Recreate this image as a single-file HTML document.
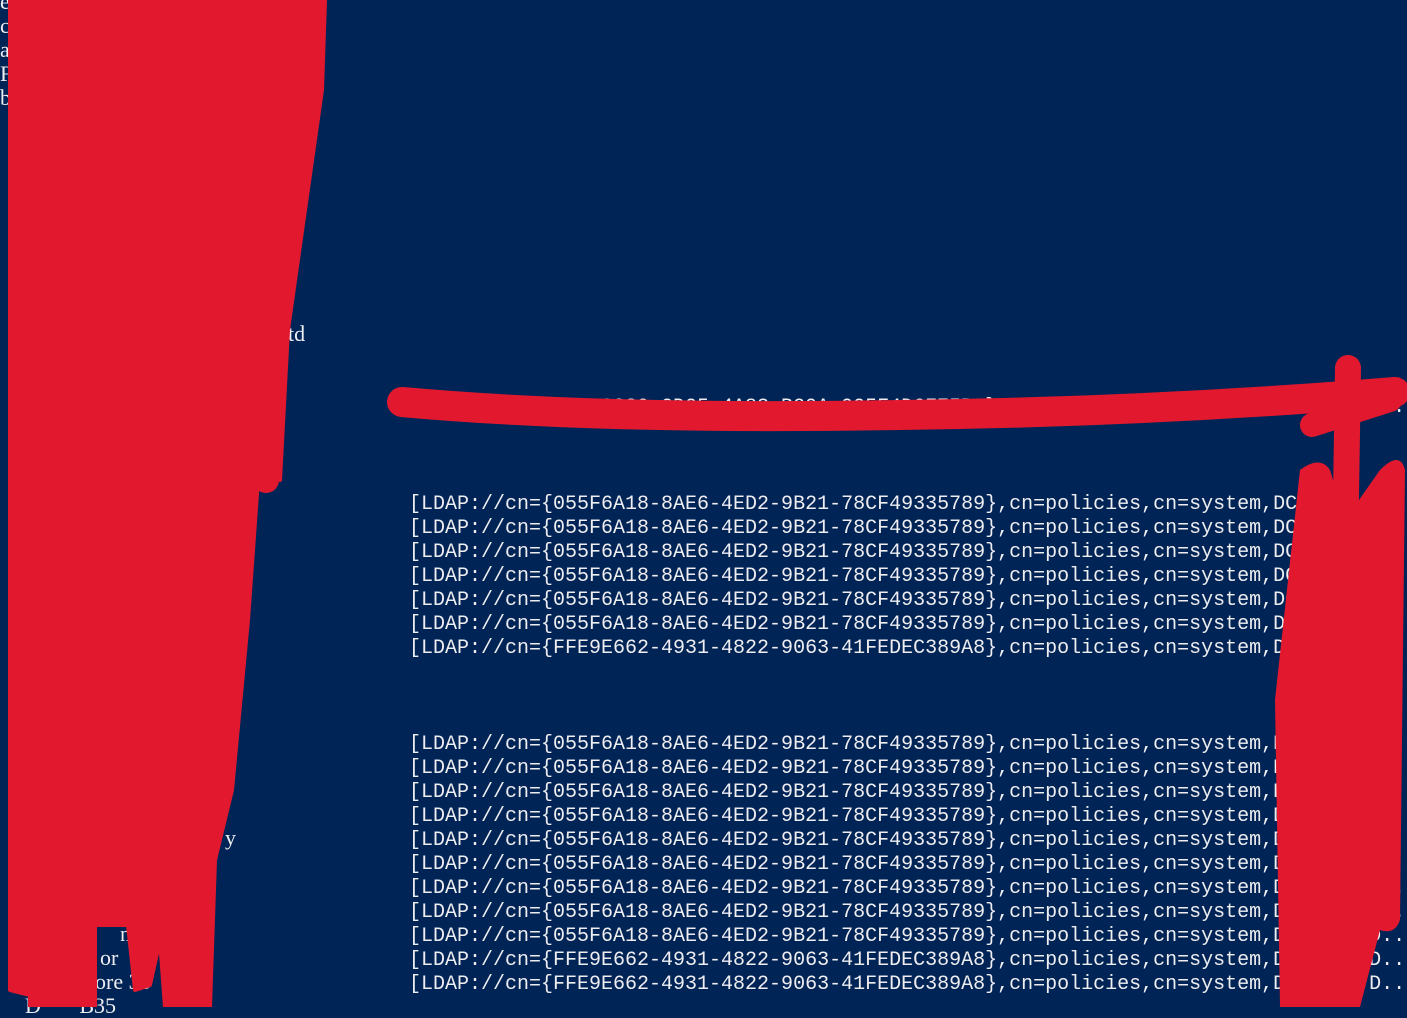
<!DOCTYPE html>
<html><head><meta charset="utf-8"><style>
html,body{margin:0;padding:0;width:1407px;height:1007px;overflow:hidden;background:#012456;}
.t{position:absolute;left:409px;font-family:"Liberation Mono",monospace;font-size:20px;line-height:24px;color:#eeedf0;white-space:pre;}
.l{position:absolute;font-family:"Liberation Serif",serif;font-size:22px;color:#eeedf0;white-space:pre;line-height:24px;}
svg{position:absolute;left:0;top:0;}
</style></head><body>
<div class="l" style="left:0;top:-10px">e<br>c<br>a<br>F<br>b</div>
<div class="l" style="left:288px;top:322px">td</div>
<div class="l" style="left:225px;top:826px">y</div>
<div class="l" style="left:120px;top:922px">n&nbsp;&nbsp;&nbsp;&nbsp;&nbsp;rch</div>
<div class="l" style="left:100px;top:946px">or</div>
<div class="l" style="left:95px;top:970px">ore 38</div>
<div class="l" style="left:25px;top:994px">D&nbsp;&nbsp;&nbsp;&nbsp;&nbsp;&nbsp;&nbsp;B35</div>
<div class="t" style="top:396px">[LDAP://cn={07532880-CD25-4A83-B29A-925F4D6F75B0},cn=policies,cn=system,DC=xxxx,DC...</div>
<div class="t" style="top:493px">[LDAP://cn={055F6A18-8AE6-4ED2-9B21-78CF49335789},cn=policies,cn=system,DC=xxxx,D...
[LDAP://cn={055F6A18-8AE6-4ED2-9B21-78CF49335789},cn=policies,cn=system,DC=xxxx,D...
[LDAP://cn={055F6A18-8AE6-4ED2-9B21-78CF49335789},cn=policies,cn=system,DC=xxxx,D...
[LDAP://cn={055F6A18-8AE6-4ED2-9B21-78CF49335789},cn=policies,cn=system,DC=xxxx,D...
[LDAP://cn={055F6A18-8AE6-4ED2-9B21-78CF49335789},cn=policies,cn=system,DC=xxxx,D...
[LDAP://cn={055F6A18-8AE6-4ED2-9B21-78CF49335789},cn=policies,cn=system,DC=xxxx,D...
[LDAP://cn={FFE9E662-4931-4822-9063-41FEDEC389A8},cn=policies,cn=system,DC=xxxx,D...</div>
<div class="t" style="top:733px">[LDAP://cn={055F6A18-8AE6-4ED2-9B21-78CF49335789},cn=policies,cn=system,DC=xxxx,D...
[LDAP://cn={055F6A18-8AE6-4ED2-9B21-78CF49335789},cn=policies,cn=system,DC=xxxx,D...
[LDAP://cn={055F6A18-8AE6-4ED2-9B21-78CF49335789},cn=policies,cn=system,DC=xxxx,D...
[LDAP://cn={055F6A18-8AE6-4ED2-9B21-78CF49335789},cn=policies,cn=system,DC=xxxx,D...
[LDAP://cn={055F6A18-8AE6-4ED2-9B21-78CF49335789},cn=policies,cn=system,DC=xxxx,D...
[LDAP://cn={055F6A18-8AE6-4ED2-9B21-78CF49335789},cn=policies,cn=system,DC=xxxx,D...
[LDAP://cn={055F6A18-8AE6-4ED2-9B21-78CF49335789},cn=policies,cn=system,DC=xxxx,D...
[LDAP://cn={055F6A18-8AE6-4ED2-9B21-78CF49335789},cn=policies,cn=system,DC=xxxx,D...
[LDAP://cn={055F6A18-8AE6-4ED2-9B21-78CF49335789},cn=policies,cn=system,DC=xxxx,D...
[LDAP://cn={FFE9E662-4931-4822-9063-41FEDEC389A8},cn=policies,cn=system,DC=xxxx,D...
[LDAP://cn={FFE9E662-4931-4822-9063-41FEDEC389A8},cn=policies,cn=system,DC=xxxx,D...</div>
<svg width="1407" height="1007" viewBox="0 0 1407 1007">
<g fill="#e2192e" stroke="#e2192e" stroke-linejoin="round">
<path stroke-width="4" d="M10,0 L325,0 L322,90 L288,330 L280,480 L258,480 L248,620 L232,790 L215,860 L210,1007 L165,1007 L160,940 L150,985 L135,990 L128,925 L95,925 L95,1007 L30,1007 L30,995 L10,990 Z"/>
</g>
<g fill="none" stroke="#e2192e" stroke-linecap="round">
<path stroke-width="30" d="M402,402 Q600,420 900,415 Q1150,412 1395,392"/>
<path stroke-width="26" d="M1348,368 L1338,1007"/>
<path stroke-width="24" d="M1312,425 L1390,400"/>
<path stroke-width="26" d="M266,100 L266,480"/>
</g>
<path fill="#e2192e" d="M1300,470 Q1320,455 1330,470 L1345,520 L1380,470 Q1400,450 1405,470 L1400,920 Q1395,935 1380,930 L1360,1007 L1280,1007 L1275,700 Z"/>
</svg>
</body></html>
